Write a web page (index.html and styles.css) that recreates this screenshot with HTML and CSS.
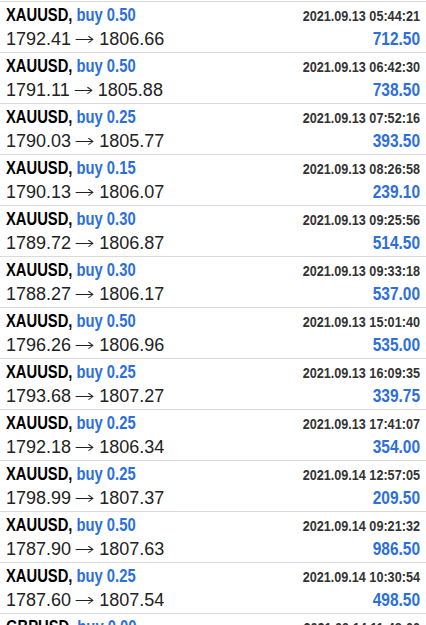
FILE: index.html
```html
<!DOCTYPE html>
<html lang="en">
<head>
  <meta charset="UTF-8" />
  <meta name="viewport" content="width=device-width, initial-scale=1.0" />
  <title>History</title>
  <link rel="stylesheet" href="styles.css">
</head>
<body>
  <ul class="deals">
    <li class="deal">
      <div class="line top"><span class="sym">XAUUSD, <span class="dir">buy 0.50</span></span><span class="time">2021.09.13 05:44:21</span></div>
      <div class="line"><span class="price">1792.41 <span class="arrow">&rarr;</span> 1806.66</span><span class="profit">712.50</span></div>
    </li>
    <li class="deal">
      <div class="line top"><span class="sym">XAUUSD, <span class="dir">buy 0.50</span></span><span class="time">2021.09.13 06:42:30</span></div>
      <div class="line"><span class="price">1791.11 <span class="arrow">&rarr;</span> 1805.88</span><span class="profit">738.50</span></div>
    </li>
    <li class="deal">
      <div class="line top"><span class="sym">XAUUSD, <span class="dir">buy 0.25</span></span><span class="time">2021.09.13 07:52:16</span></div>
      <div class="line"><span class="price">1790.03 <span class="arrow">&rarr;</span> 1805.77</span><span class="profit">393.50</span></div>
    </li>
    <li class="deal">
      <div class="line top"><span class="sym">XAUUSD, <span class="dir">buy 0.15</span></span><span class="time">2021.09.13 08:26:58</span></div>
      <div class="line"><span class="price">1790.13 <span class="arrow">&rarr;</span> 1806.07</span><span class="profit">239.10</span></div>
    </li>
    <li class="deal">
      <div class="line top"><span class="sym">XAUUSD, <span class="dir">buy 0.30</span></span><span class="time">2021.09.13 09:25:56</span></div>
      <div class="line"><span class="price">1789.72 <span class="arrow">&rarr;</span> 1806.87</span><span class="profit">514.50</span></div>
    </li>
    <li class="deal">
      <div class="line top"><span class="sym">XAUUSD, <span class="dir">buy 0.30</span></span><span class="time">2021.09.13 09:33:18</span></div>
      <div class="line"><span class="price">1788.27 <span class="arrow">&rarr;</span> 1806.17</span><span class="profit">537.00</span></div>
    </li>
    <li class="deal">
      <div class="line top"><span class="sym">XAUUSD, <span class="dir">buy 0.50</span></span><span class="time">2021.09.13 15:01:40</span></div>
      <div class="line"><span class="price">1796.26 <span class="arrow">&rarr;</span> 1806.96</span><span class="profit">535.00</span></div>
    </li>
    <li class="deal">
      <div class="line top"><span class="sym">XAUUSD, <span class="dir">buy 0.25</span></span><span class="time">2021.09.13 16:09:35</span></div>
      <div class="line"><span class="price">1793.68 <span class="arrow">&rarr;</span> 1807.27</span><span class="profit">339.75</span></div>
    </li>
    <li class="deal">
      <div class="line top"><span class="sym">XAUUSD, <span class="dir">buy 0.25</span></span><span class="time">2021.09.13 17:41:07</span></div>
      <div class="line"><span class="price">1792.18 <span class="arrow">&rarr;</span> 1806.34</span><span class="profit">354.00</span></div>
    </li>
    <li class="deal">
      <div class="line top"><span class="sym">XAUUSD, <span class="dir">buy 0.25</span></span><span class="time">2021.09.14 12:57:05</span></div>
      <div class="line"><span class="price">1798.99 <span class="arrow">&rarr;</span> 1807.37</span><span class="profit">209.50</span></div>
    </li>
    <li class="deal">
      <div class="line top"><span class="sym">XAUUSD, <span class="dir">buy 0.50</span></span><span class="time">2021.09.14 09:21:32</span></div>
      <div class="line"><span class="price">1787.90 <span class="arrow">&rarr;</span> 1807.63</span><span class="profit">986.50</span></div>
    </li>
    <li class="deal">
      <div class="line top"><span class="sym">XAUUSD, <span class="dir">buy 0.25</span></span><span class="time">2021.09.14 10:30:54</span></div>
      <div class="line"><span class="price">1787.60 <span class="arrow">&rarr;</span> 1807.54</span><span class="profit">498.50</span></div>
    </li>
    <li class="deal">
      <div class="line top"><span class="sym">GBPUSD, <span class="dir">buy 0.00</span></span><span class="time">2021.09.14 11:48:00</span></div>
      <div class="line"><span class="price">1.38412 <span class="arrow">&rarr;</span> 1.38530</span><span class="profit">0.00</span></div>
    </li>
  </ul>
</body>
</html>
```

FILE: styles.css
```css
:root {
  --blue: #2c6fdc;
  --line: #dadada;
  --grey: #333333;
}
*, *::before, *::after { box-sizing: border-box; }
body {
  margin: 0;
  background: #ffffff;
  font-family: 'Liberation Sans', Arial, sans-serif;
  color: #111111;
}
.deals { list-style: none; margin: 0; padding: 1px 0 0; }
.deal {
  height: 51px;
  border-top: 1px solid var(--line);
  padding: 3px 6px 0 6px;
}
.line {
  display: flex; justify-content: space-between; align-items: baseline;
}
.line.top { height: 22px; }
/* condensed look: no narrow face installed, so squeeze the bold face */
.sym, .time, .profit {
  display: inline-block;
  font-weight: 700;
  white-space: nowrap;
}
.sym { font-size: 18px; color: #000; transform: scaleX(.82); transform-origin: left center; }
.dir { color: var(--blue); }
.time { font-size: 15.5px; color: var(--grey); transform: scaleX(.815); transform-origin: right center; }
.price { font-size: 18px; color: #222; line-height: 24px; }
.arrow {
  display: inline-block;
  font-family: 'DejaVu Sans', sans-serif;
  font-weight: 300;
  transform: scaleX(1.35);
  margin: 0 2px 0 1px;
}
.profit { font-size: 18px; color: var(--blue); transform: scaleX(.86); transform-origin: right center; }
```
